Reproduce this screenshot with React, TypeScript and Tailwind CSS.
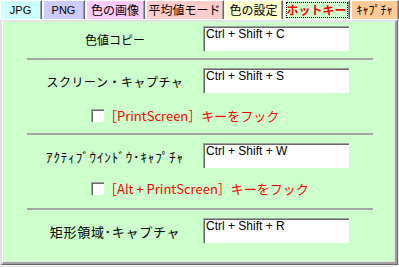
import React from "react";

const jp = "font-['Noto_Sans_CJK_JP','Noto_Sans',sans-serif]";

function Tab({
  label,
  bg,
  w,
  selected,
  latin,
}: {
  label: string;
  bg: string;
  w: string;
  selected?: boolean;
  latin?: boolean;
}) {
  return (
    <div className={`${w} h-[19px] shrink-0 border-l border-t border-white border-r border-r-[#696969]`}>
      <div className={`h-full w-full ${bg} border-r border-r-[#a0a0a0] flex items-center justify-center`}>
        {selected ? (
          <div className="h-[16px] w-[62px] border border-dotted border-black flex items-center justify-center">
            <span className={`${jp} text-[12px] leading-[14px] font-bold text-[#ff0000]`}>{label}</span>
          </div>
        ) : (
          <span
            className={`${latin ? "font-['Liberation_Sans',sans-serif] text-[11px]" : `${jp} text-[12px]`} leading-[14px] text-black`}
          >
            {label}
          </span>
        )}
      </div>
    </div>
  );
}

function TextBox({ value }: { value: string }) {
  return (
    <div className="w-[146px] h-[25px] border-t border-l border-[#a0a0a0] border-r-white border-b-white">
      <div className="h-full w-full border-t border-l border-[#696969] border-r-[#e3e3e3] border-b-[#e3e3e3] bg-white pl-[1px]">
        <span className="font-['Liberation_Sans',sans-serif] text-[12px] leading-[12px] text-black block">
          {value}
        </span>
      </div>
    </div>
  );
}

function CheckBox() {
  return (
    <div className="w-[13px] h-[13px] shrink-0 border-t border-l border-[#a0a0a0] border-r-white border-b-white">
      <div className="h-full w-full border-t border-l border-[#696969] border-r-[#e3e3e3] border-b-[#e3e3e3] bg-white" />
    </div>
  );
}

function Sep({ mt }: { mt: string }) {
  return <div className={`${mt} ml-[24px] w-[346px] h-[2px] bg-[#a5a5a5]`} />;
}

function Row({ label, value, mt, labelClass }: { label: string; value: string; mt: string; labelClass: string }) {
  return (
    <div className={`${mt} flex items-center h-[25px]`}>
      <div className="w-[200px] pl-[24px] text-center">
        <span className={`${jp} ${labelClass} text-black whitespace-nowrap`}>{label}</span>
      </div>
      <TextBox value={value} />
    </div>
  );
}

function CheckRow({ label, mt }: { label: string; mt: string }) {
  return (
    <div className={`${mt} flex items-center h-[13px] pl-[88px] gap-0`}>
      <CheckBox />
      <span className={`${jp} text-[13px] leading-[13px] text-[#ff0000] whitespace-nowrap`}>{label}</span>
    </div>
  );
}

export default function App() {
  return (
    <div className="w-[399px] h-[267px] bg-[#f0f0f0] overflow-hidden">
      <div className="flex h-[19px] gap-px">
        <Tab label="JPG" bg="bg-[#ccffff]" w="w-[42px]" latin />
        <Tab label="PNG" bg="bg-[#ccccff]" w="w-[42px]" latin />
        <Tab label="色の画像" bg="bg-[#ffccff]" w="w-[59px]" />
        <Tab label="平均値モード" bg="bg-[#ffcccc]" w="w-[78px]" />
        <Tab label="色の設定" bg="bg-[#ffffcc]" w="w-[58px]" />
        <Tab label="ホットキー" bg="bg-[#ccffcc]" w="w-[66px]" selected />
        <Tab label="ｷｬﾌﾟﾁｬ" bg="bg-[#ffcc99]" w="w-[48px]" />
      </div>
      <div className="w-[398px] h-[246px] border-t border-t-white border-l-2 border-l-[#e3e3e3] border-r border-r-[#696969] border-b border-b-[#696969]">
        <div className="h-full w-full border-t-2 border-t-[#e3e3e3] border-l border-l-white border-r-2 border-r-[#a0a0a0] border-b-2 border-b-[#a0a0a0]">
          <div className="h-full w-full border-r border-b border-[#e3e3e3] bg-[#ccffcc] flex flex-col pt-[4px]">
            <Row label="色値コピー" value="Ctrl + Shift + C" mt="mt-0" labelClass="text-[12px] leading-[14px]" />
            <Sep mt="mt-[7px]" />
            <Row
              label="スクリーン・キャプチャ"
              value="Ctrl + Shift + S"
              mt="mt-[8px]"
              labelClass="text-[12px] leading-[14px] tracking-[0.5px]"
            />
            <CheckRow label="［PrintScreen］キーをフック" mt="mt-[16px]" />
            <Sep mt="mt-[11px]" />
            <Row
              label="ｱｸﾃｨﾌﾞｳｲﾝﾄﾞｳ･ｷｬﾌﾟﾁｬ"
              value="Ctrl + Shift + W"
              mt="mt-[8px]"
              labelClass="text-[13px] leading-[14px] tracking-[0.9px]"
            />
            <CheckRow label="［Alt + PrintScreen］キーをフック" mt="mt-[14px]" />
            <Sep mt="mt-[13px]" />
            <Row
              label="矩形領域･キャプチャ"
              value="Ctrl + Shift + R"
              mt="mt-[8px]"
              labelClass="text-[13px] leading-[14px] tracking-[0.7px]"
            />
          </div>
        </div>
      </div>
    </div>
  );
}
